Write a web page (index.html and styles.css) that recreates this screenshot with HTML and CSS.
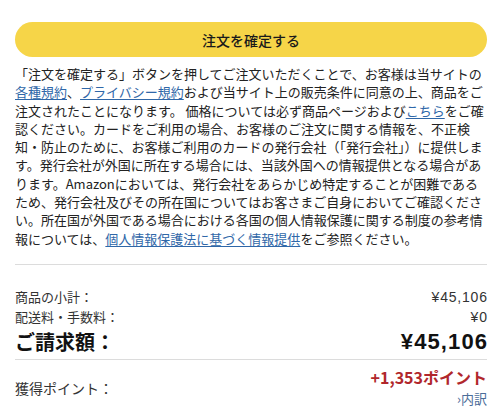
FILE: index.html
```html
<!DOCTYPE html>
<html lang="ja">
<head>
<meta charset="utf-8">
<link rel="stylesheet" href="styles.css">
</head>
<body>
<div class="page">
  <button class="place-order">注文を確定する</button>
  <p class="legal">「注文を確定する」ボタンを押してご注文いただくことで、お客様は当サイトの<a href="#">各種規約</a>、<a href="#">プライバシー規約</a>および当サイト上の販売条件に同意の上、商品をご注文されたことになります。 価格については必ず商品ページおよび<a href="#">こちら</a>をご確認ください。カードをご利用の場合、お客様のご注文に関する情報を、不正検知・防止のために、お客様ご利用のカードの発行会社（「発行会社」）に提供します。発行会社が外国に所在する場合には、当該外国への情報提供となる場合があります。Amazonにおいては、発行会社をあらかじめ特定することが困難であるため、発行会社及びその所在国についてはお客さまご自身においてご確認ください。所在国が外国である場合における各国の個人情報保護に関する制度の参考情報については、<a href="#">個人情報保護法に基づく情報提供</a>をご参照ください。</p>
  <hr class="divider">
  <div class="summary">
    <div class="row"><span>商品の小計：</span><span class="num">¥45,106</span></div>
    <div class="row"><span>配送料・手数料：</span><span class="num">¥0</span></div>
    <div class="row total"><span>ご請求額：</span><span class="num">¥45,106</span></div>
  </div>
  <hr class="divider tight">
  <div class="points">
    <span class="points-label">獲得ポイント：</span>
    <div class="points-value">
      <span class="points-amount">+1,353ポイント</span>
      <a href="#" class="breakdown">›内訳</a>
    </div>
  </div>
</div>
</body>
</html>
```
FILE: styles.css
```css
* { box-sizing: border-box; }
html, body { margin: 0; padding: 0; background: #fff; }
body {
  font-family: "Noto Sans CJK JP", "Noto Sans", sans-serif;
  color: #222;
}
.page {
  padding: 22px 13px 0 15px;
}
.place-order {
  display: block;
  width: 100%;
  height: 35px;
  border: none;
  border-radius: 18px;
  background: #f6d548;
  font-family: "Noto Sans CJK JP", sans-serif;
  font-size: 14px;
  font-weight: 500;
  color: #1a1a1a;
  padding: 0;
}
.legal {
  margin: 8px 0 0 0;
  font-size: 13px;
  line-height: 18.3px;
  color: #222;
}
.legal a {
  display: inline-block;
  height: 18.3px;
  line-height: 18.3px;
  color: #2f67a8;
  text-decoration: underline;
  text-underline-offset: 2px;
}
.divider {
  border: none;
  border-top: 1px solid #dcdcdc;
  margin: 16px 0 0 0;
}
.divider.tight { margin-top: 2px; }
.summary {
  padding-top: 22px;
}
.row {
  display: flex;
  justify-content: space-between;
  align-items: center;
  font-size: 13px;
  line-height: 20px;
  color: #333;
}
.row .num {
  font-family: "Liberation Sans", sans-serif;
  font-size: 14px;
  letter-spacing: 0.8px;
  margin-right: -0.8px;
}
.row.total {
  font-size: 20px;
  font-weight: 700;
  line-height: 30px;
  color: #111;
}
.row.total .num {
  font-size: 22px;
  letter-spacing: 1.1px;
  margin-right: -1.1px;
}
.points {
  display: flex;
  justify-content: space-between;
  align-items: center;
  padding-top: 6px;
}
.points-label {
  font-size: 14px;
  color: #333;
}
.points-value {
  display: flex;
  flex-direction: column;
  align-items: flex-end;
}
.points-amount {
  color: #b1272c;
  font-weight: 700;
  font-size: 16px;
  line-height: 22px;
}
.breakdown {
  color: #4b6d99;
  text-decoration: none;
  font-size: 13px;
  line-height: 22px;
}
```
